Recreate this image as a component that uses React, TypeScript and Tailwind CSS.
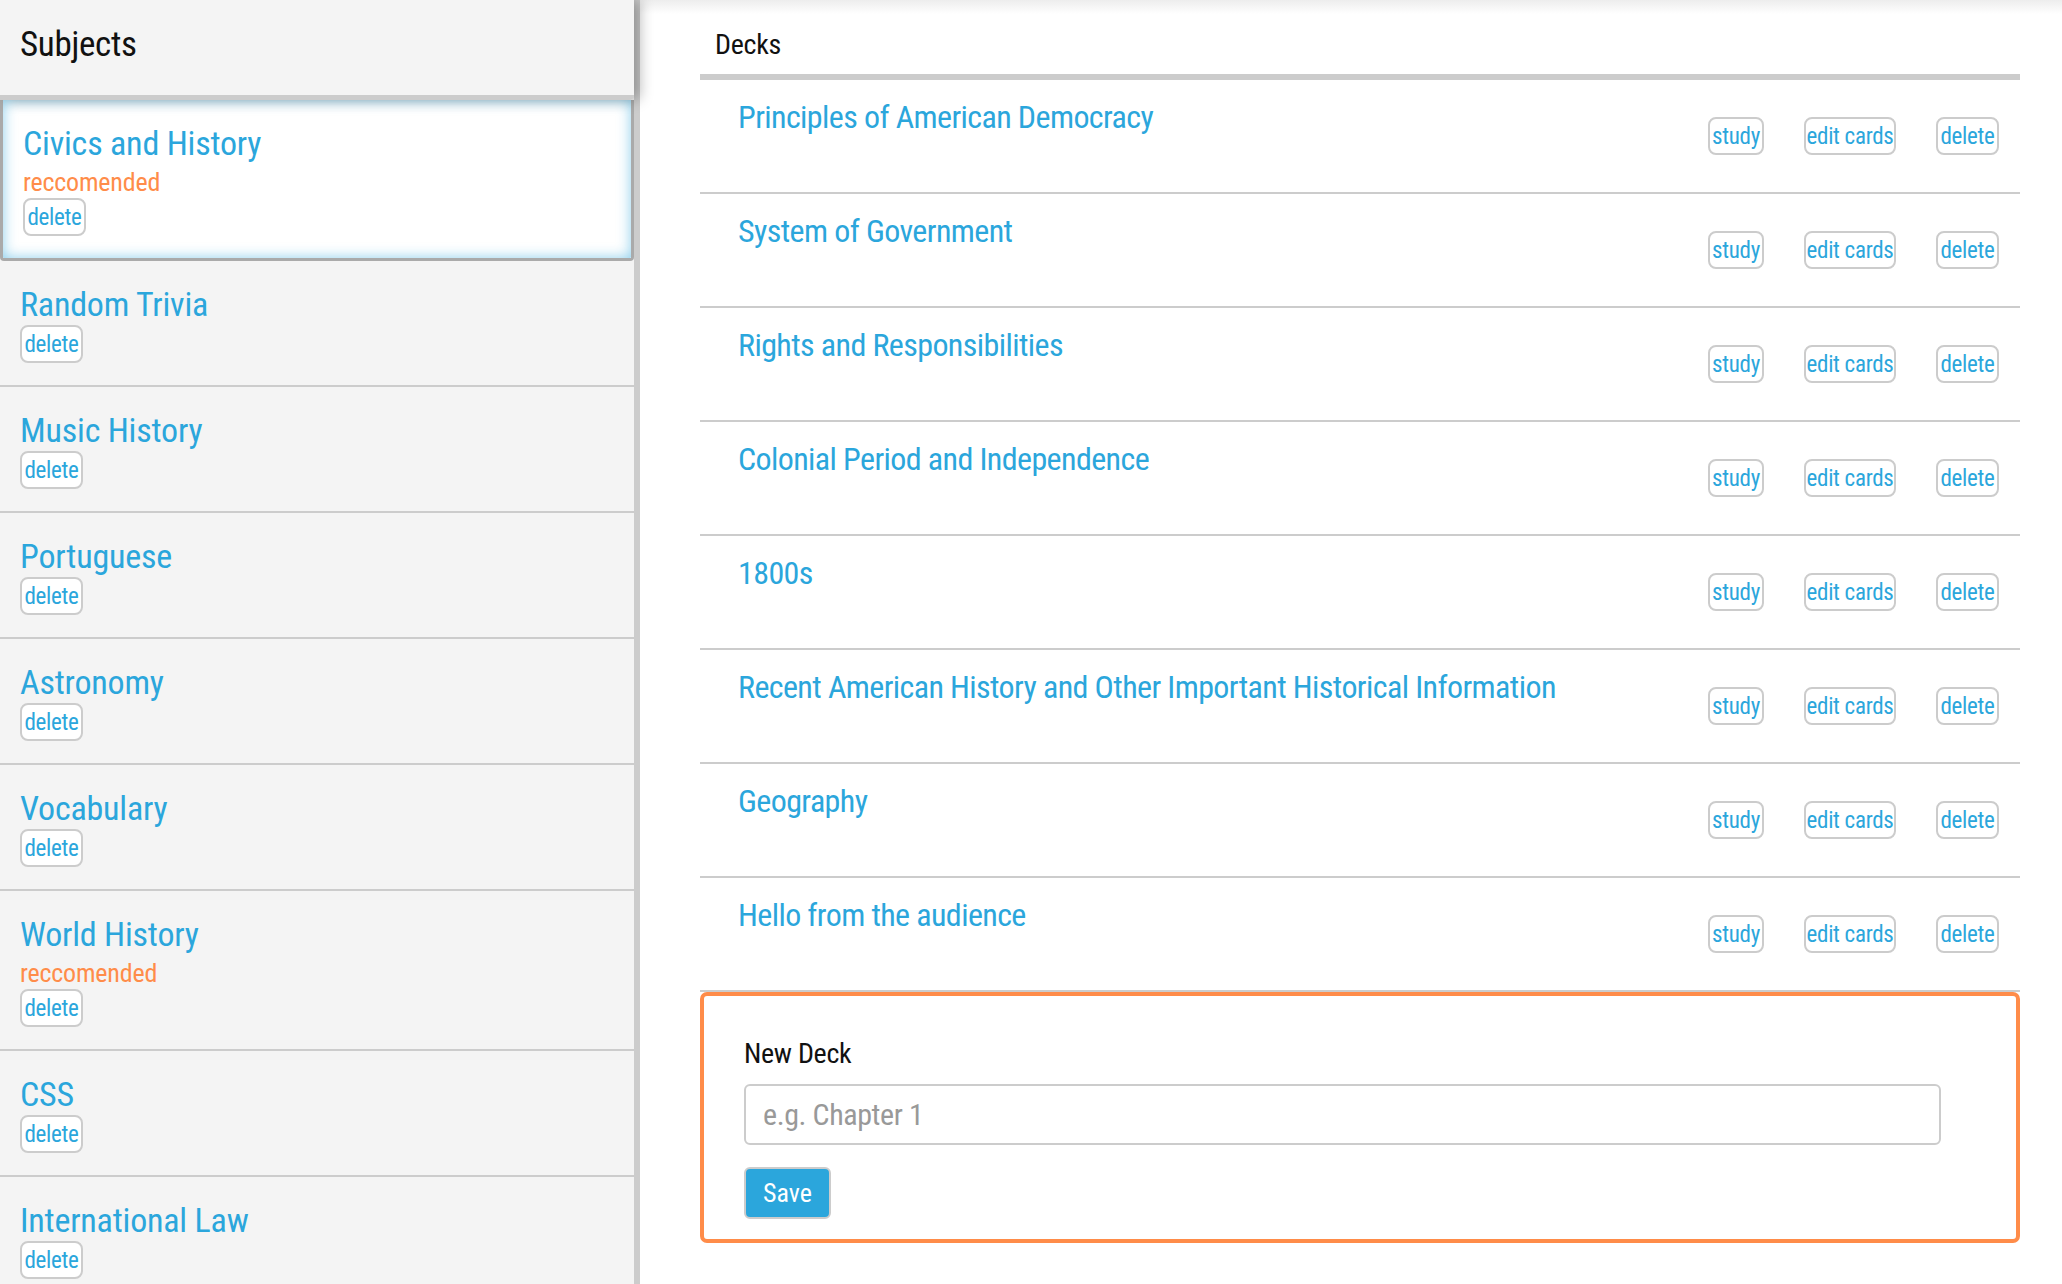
const SUBJECTS = [
  { name: 'Civics and History', recommended: true, selected: true },
  { name: 'Random Trivia' },
  { name: 'Music History' },
  { name: 'Portuguese' },
  { name: 'Astronomy' },
  { name: 'Vocabulary' },
  { name: 'World History', recommended: true },
  { name: 'CSS' },
  { name: 'International Law' },
]

const DECKS = [
  'Principles of American Democracy',
  'System of Government',
  'Rights and Responsibilities',
  'Colonial Period and Independence',
  '1800s',
  'Recent American History and Other Important Historical Information',
  'Geography',
  'Hello from the audience',
]

function SmallButton({ label, width }: { label: string; width: string }) {
  return (
    <button
      className={`${width} h-[38px] rounded-[8px] border-2 border-[#cccccc] bg-white text-[23px] leading-none tracking-[-0.3px] text-[#2ba6dc]`}
    >
      {label}
    </button>
  )
}

function SubjectItem({ name, recommended, selected }: { name: string; recommended?: boolean; selected?: boolean }) {
  return (
    <div
      className={
        selected
          ? 'pl-5 pt-[23px] pb-[22px] bg-white border-x-[3px] border-b-[3px] border-[#aaaaaa] rounded-b-[4px] shadow-[inset_0_0_14px_rgba(43,166,220,0.55)]'
          : 'pl-5 pt-[23px] pb-[22px] border-b-2 border-[#cccccc]'
      }
    >
      <div className="text-[34px] leading-[40px] tracking-[-0.2px] text-[#2ba6dc]">{name}</div>
      {recommended && <div className="pt-[4px] text-[26px] leading-[31px] tracking-[-0.2px] text-[#ff8c49]">reccomended</div>}
      <div className={recommended ? 'pt-0' : 'pt-px'}>
        <button className="w-[63px] h-[38px] rounded-[8px] border-2 border-[#cccccc] bg-white text-[23px] leading-none tracking-[-0.3px] text-[#2ba6dc]">
          delete
        </button>
      </div>
    </div>
  )
}

export default function App() {
  return (
    <div className="flex h-[1284px] overflow-hidden bg-white font-['Roboto_Condensed',_'Liberation_Sans',_sans-serif]">
      <aside className="w-[640px] shrink-0 bg-[#f4f4f4] border-r-[6px] border-[#cccccc] flex flex-col">
        <div className="relative z-10 h-[100px] shrink-0 bg-[#f4f4f4] border-b-[5px] border-[#cccccc] rounded-br-[5px] shadow-[6px_0_14px_rgba(0,0,0,0.28)] pl-5 flex items-center">
          <h1 className="text-[35px] leading-none tracking-[-0.3px] text-[#111111] -mt-[6px]">Subjects</h1>
        </div>
        <div className="flex flex-col">
          {SUBJECTS.map((s) => (
            <SubjectItem key={s.name} {...s} />
          ))}
        </div>
      </aside>

      <main className="relative flex-1 pl-[60px] pr-[42px]">
        <div className="absolute inset-x-0 top-0 h-[14px] bg-gradient-to-b from-[#ededed] to-white" />
        <div className="relative">
          <div className="pl-[15px] pt-[28px] pb-[12px] border-b-[6px] border-[#cccccc]">
            <h2 className="text-[28px] leading-[34px] tracking-[-0.3px] text-[#111111]">Decks</h2>
          </div>

          {DECKS.map((d) => (
            <div key={d} className="h-[114px] flex justify-between border-b-2 border-[#cccccc]">
              <h3 className="pl-[38px] pt-[18px] text-[32px] leading-[38px] tracking-[-0.6px] text-[#2ba6dc]">{d}</h3>
              <div className="flex gap-10 pt-[37px] pr-[21px] shrink-0">
                <SmallButton label="study" width="w-[56px]" />
                <SmallButton label="edit cards" width="w-[92px]" />
                <SmallButton label="delete" width="w-[63px]" />
              </div>
            </div>
          ))}

          <div className="border-4 border-[#ff8c49] rounded-[7px] pl-10 pt-[41px] pb-5">
            <label className="block text-[28px] leading-[34px] tracking-[-0.3px] text-[#111111]">New Deck</label>
            <input
              className="mt-[13px] block w-[1197px] h-[61px] rounded-[6px] border-2 border-[#cccccc] pl-[17px] text-[30px] tracking-[-0.4px] text-[#333333] placeholder:text-[#999999] outline-none"
              placeholder="e.g. Chapter 1"
            />
            <button className="mt-[22px] w-[87px] h-[52px] rounded-[6px] border-2 border-[#cccccc] bg-[#2ba6dc] text-[26px] text-white">
              Save
            </button>
          </div>
        </div>
      </main>
    </div>
  )
}
